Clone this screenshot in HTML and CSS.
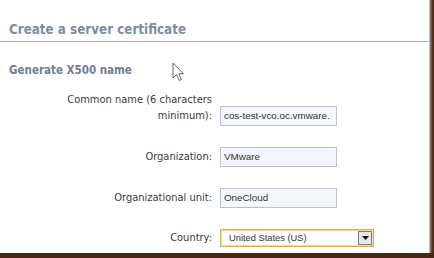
FILE: index.html
```html
<!DOCTYPE html>
<html>
<head>
<meta charset="utf-8">
<link rel="stylesheet" href="styles.css">
</head>
<body>
<div class="page">
  <h1 class="title">Create a server certificate</h1>
  <section class="section">
    <h2 class="subtitle">Generate X500 name</h2>
    <div class="form">
      <div class="row row-tall">
        <label class="label">Common name (6 characters minimum):</label>
        <div class="input">cos-test-vco.oc.vmware.</div>
      </div>
      <div class="row">
        <label class="label">Organization:</label>
        <div class="input">VMware</div>
      </div>
      <div class="row">
        <label class="label">Organizational unit:</label>
        <div class="input">OneCloud</div>
      </div>
      <div class="row">
        <label class="label">Country:</label>
        <div class="select">
          <span class="select-text">United States (US)</span>
          <span class="select-btn"><svg width="7" height="4" viewBox="0 0 7 4"><path d="M0 0H7L3.5 4Z" fill="#111"/></svg></span>
        </div>
      </div>
    </div>
  </section>
  <svg class="cursor" width="13" height="20" viewBox="0 0 13 20">
    <path d="M1 1V16L4.5 12.5L7.2 18.5L9.4 17.5L6.8 11.8H11.5Z" fill="#fff" stroke="#666" stroke-width="1" stroke-linejoin="round"/>
  </svg>
</div>
</body>
</html>
```

FILE: styles.css
```css
html {
  background: #4a2818;
}
body {
  margin: 0;
}
.page {
  position: relative;
  width: 429px;
  height: 253px;
  background: #fff;
  box-shadow: 0 0 0 1px #c2bbb5, 0 0 0 2px #8e7a6e, 0 0 0 3px #6b4b3b, 0 0 0 4px #5a3828;
  overflow: hidden;
}
.title {
  margin: 0;
  padding: 22px 0 3px 9px;
  font-family: "DejaVu Sans Condensed", "DejaVu Sans", sans-serif;
  font-weight: bold;
  font-size: 13.3px;
  line-height: 16px;
  color: #7e8ca3;
  border-bottom: 1px solid #a9b1c0;
}
.section {
  padding: 21px 0 0 9px;
}
.subtitle {
  margin: 0;
  font-family: "DejaVu Sans Condensed", "DejaVu Sans", sans-serif;
  font-weight: bold;
  font-size: 11.5px;
  line-height: 14px;
  color: #6f7d95;
}
.form {
  display: flex;
  flex-direction: column;
  gap: 21px;
  margin-top: 15px;
}
.row {
  display: flex;
  align-items: center;
  gap: 8px;
}
.row-tall {
  align-items: flex-end;
}
.row-tall .label {
  padding-bottom: 2px;
}
.label {
  box-sizing: border-box;
  width: 203px;
  padding-left: 52px;
  text-align: right;
  font-family: "DejaVu Sans Condensed", "DejaVu Sans", sans-serif;
  font-size: 11px;
  line-height: 16px;
  color: #3a3a3a;
}
.input {
  box-sizing: border-box;
  width: 117px;
  height: 20px;
  border: 1px solid #b6c2d4;
  background: #f3f6fc;
  padding: 0 3px;
  font-family: "Liberation Sans", Arial, sans-serif;
  font-size: 9.8px;
  line-height: 18px;
  color: #333;
  white-space: nowrap;
  overflow: hidden;
}
.select {
  box-sizing: border-box;
  width: 154px;
  height: 18px;
  border: 1px solid #dcac4c;
  box-shadow: inset 0 0 0 1px #f3dca8;
  background: #fff;
  display: flex;
  align-items: center;
  justify-content: space-between;
  padding: 0 1px 0 8px;
  font-family: "Liberation Sans", Arial, sans-serif;
  font-size: 9.3px;
  color: #333;
}
.select-btn {
  box-sizing: border-box;
  width: 14px;
  height: 14px;
  border: 1px solid #7c7c7c;
  background: #e6e6e6;
  display: flex;
  align-items: center;
  justify-content: center;
}
.cursor {
  position: absolute;
  left: 172px;
  top: 62px;
}
```
